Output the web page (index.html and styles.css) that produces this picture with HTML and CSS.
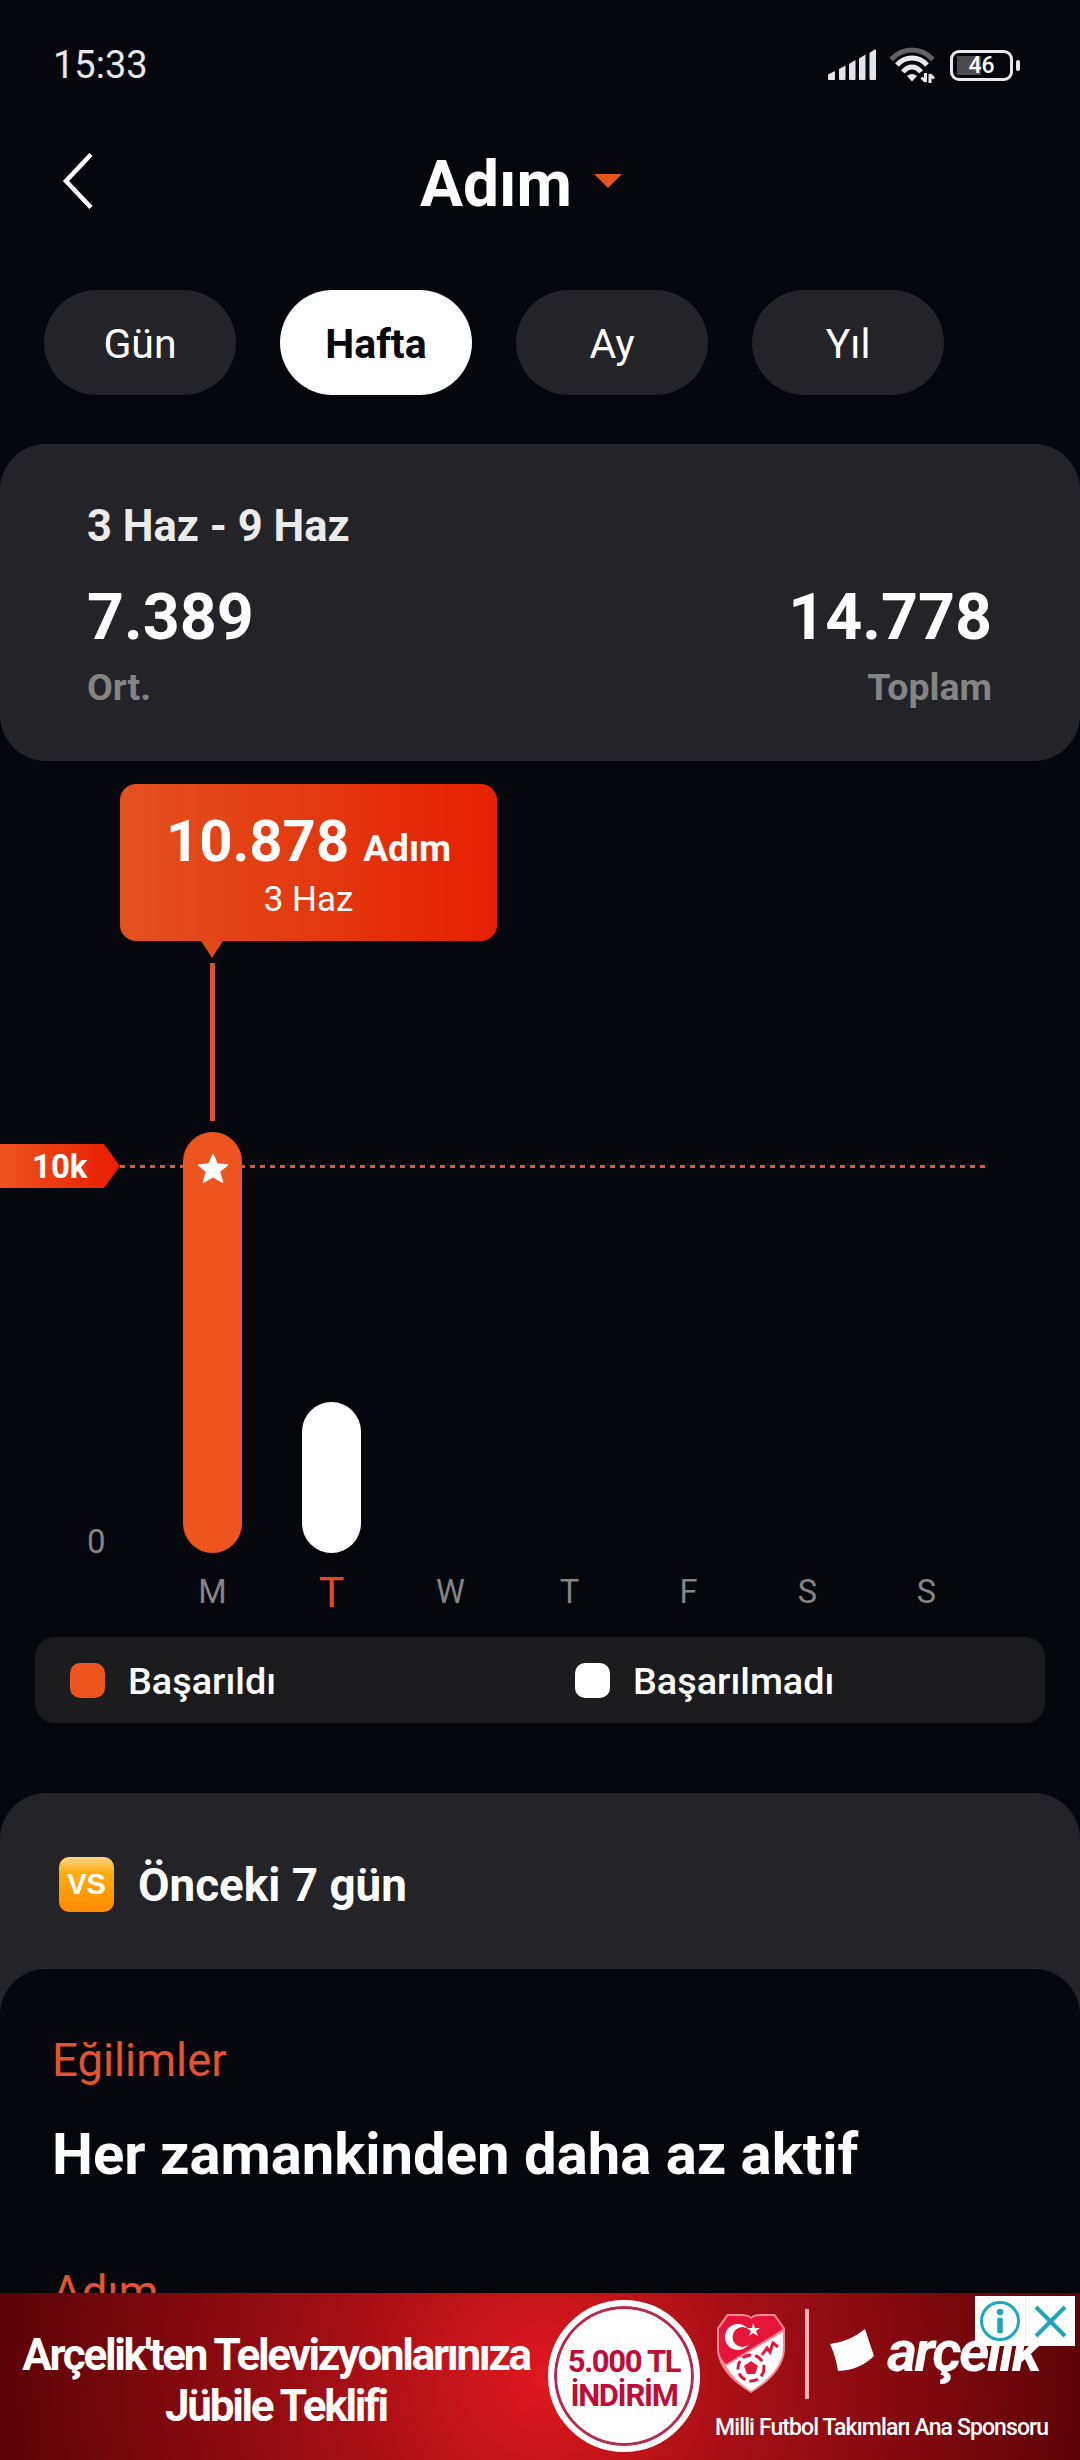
FILE: index.html
```html
<!DOCTYPE html>
<html lang="tr">
<head>
    <meta charset="UTF-8">
    <meta name="viewport" content="width=device-width, initial-scale=1.0">
    <title>Adım</title>
    <link rel="stylesheet" href="styles.css">
</head>
<body>

<div class="status-bar">
    <span class="time">15:33</span>
    <div class="status-icons">
        <svg class="signal" width="48" height="32" viewBox="0 0 48 32" fill="#e4e4e8">
            <path d="M0 25.500l7-3.500v8q0 1-1 1h-5q-1 0-1-1z"/>
            <path d="M11 20l6.500-3.500v13.500q0 1-1 1h-4.500q-1 0-1-1z"/>
            <path d="M21 15l6.500-4v19q0 1-1 1h-4.500q-1 0-1-1z"/>
            <path d="M31 9.500l6.500-4v24.500q0 1-1 1h-4.500q-1 0-1-1z"/>
            <path d="M41.500 4l5-3.500q1.500-.5 1.500 1v28.500q0 1-1 1h-4.500q-1 0-1-1z"/>
        </svg>
        <svg class="wifi" width="46" height="36" viewBox="0 0 46 36" fill="none" stroke-width="5">
            <path d="M2 12.500Q11 3 23 3T44 12.500" stroke="#626264"/>
            <path d="M8 18Q14 11 23 11T38 18" stroke="#e8e8ec"/>
            <path d="M14 25Q18 20 23 20T32 25" stroke="#e8e8ec"/>
            <path d="M18 29q5-4 10 0l-5 5.500z" fill="#e8e8ec"/>
            <path d="M36.500 26v9M41 27v9M36.500 34.500l-4-4M41 27.500l4 4" stroke="#e8e8ec" stroke-width="3"/>
        </svg>
        <div class="battery"><span>46</span></div>
    </div>
</div>

<header class="header">
    <svg class="back" width="32" height="56" viewBox="0 0 32 56" fill="none" stroke="#fff" stroke-width="4.500">
        <path d="M29 1.500L4 28l25 26.500"/>
    </svg>
    <h1>Adım</h1>
    <span class="caret"></span>
</header>

<nav class="tabs">
    <button type="button">Gün</button>
    <button type="button" class="active">Hafta</button>
    <button type="button">Ay</button>
    <button type="button">Yıl</button>
</nav>

<section class="summary">
    <p class="range">3 Haz - 9 Haz</p>
    <div class="totals">
        <div>
            <strong>7.389</strong>
            <span>Ort.</span>
        </div>
        <div class="right">
            <strong>14.778</strong>
            <span>Toplam</span>
        </div>
    </div>
</section>

<section class="chart">
    <div class="goal-line"></div>
    <div class="goal">10k</div>
    <div class="tooltip">
        <div><b>10.878</b><strong>Adım</strong></div>
        <span>3 Haz</span>
    </div>
    <div class="marker"></div>
    <div class="plot">
        <span class="zero">0</span>
        <div class="bars">
            <div class="col">
                <div class="bar done" style="height: 421px">
                    <svg width="32" height="31" viewBox="0 0 32 31" fill="#fff" stroke="#fff" stroke-width="1.500" stroke-linejoin="round">
                        <path d="M16 1.500L20 11L30.500 12L22.500 18.500L25.500 29L16 23.500L6.500 29L9.500 18.500L1.500 12L12 11z"/>
                    </svg>
                </div>
            </div>
            <div class="col"><div class="bar" style="height: 151px"></div></div>
            <div class="col"></div>
            <div class="col"></div>
            <div class="col"></div>
            <div class="col"></div>
            <div class="col"></div>
        </div>
    </div>
    <div class="days">
        <span>M</span>
        <span class="today">T</span>
        <span>W</span>
        <span>T</span>
        <span>F</span>
        <span>S</span>
        <span>S</span>
    </div>
</section>

<div class="legend">
    <div><i class="done"></i>Başarıldı</div>
    <div><i></i>Başarılmadı</div>
</div>

<section class="compare">
    <div class="compare-title">
        <span class="vs">VS</span>
        <h2>Önceki 7 gün</h2>
    </div>
    <div class="trends">
        <p class="label">Eğilimler</p>
        <h3>Her zamankinden daha az aktif</h3>
        <p class="label">Adım</p>
    </div>
</section>

<aside class="ad">
    <div class="ad-text">
        <span class="line1">Arçelik'ten Televizyonlarınıza</span>
        <span class="line2">Jübile Teklifi</span>
    </div>
    <div class="ad-circle">
        <span class="amount">5.000 TL</span>
        <span class="discount">İNDİRİM</span>
    </div>
    <div class="ad-sponsor">
        <div class="logos">
            <svg class="crest" width="72" height="84" viewBox="0 0 72 84">
                <path d="M12 3h14q8 0 10 3q2-3 10-3h14l10 14v22q-2 24-34 43Q4 63 2 39V17z" fill="#f08a94"/>
                <path d="M13 5h13q8 0 10 3q2-3 10-3h13l9 13-57 35Q4 46 4 39V18z" fill="#e5163a"/>
                <path d="M68 21v18q-2 22-32 41Q19 69 11 55z" fill="#fff"/>
                <circle cx="23" cy="26" r="13" fill="#fff"/>
                <circle cx="27.500" cy="26" r="10" fill="#e5163a"/>
                <path d="M38 12l2 5 5 0-4 3 2 5-5-3-4 3 2-5-4-3h5z" fill="#fff"/>
                <path d="M47 44l5-7 3 4 3-9 5 4" fill="none" stroke="#e5163a" stroke-width="3"/>
                <circle cx="36" cy="57" r="13" fill="none" stroke="#e5163a" stroke-width="3" stroke-dasharray="9 4"/>
                <path d="M36 50l7 5-3 8h-8l-3-8z" fill="#e5163a"/>
            </svg>
            <span class="divider"></span>
            <svg class="flag" width="46" height="46" viewBox="0 0 46 46" fill="#fff">
                <path d="M1 16Q20 14 36 1L45 28Q31 42 9 43Q7 29 1 16z"/>
            </svg>
            <span class="brand">arçelik</span>
        </div>
        <span class="sponsor">Milli Futbol Takımları Ana Sponsoru</span>
    </div>
    <div class="ad-choices">
        <svg width="100" height="50" viewBox="0 0 100 50" fill="none" stroke="#1aa7bf">
            <path d="M50.500 0v50" stroke="#eee" stroke-width="1"/>
            <circle cx="25" cy="25" r="18.500" stroke-width="3"/>
            <circle cx="25" cy="16" r="3.200" fill="#1aa7bf" stroke="none"/>
            <path d="M25 22v15" stroke-width="5.500"/>
            <path d="M61 11l29 29M90 11l-29 29" stroke-width="4"/>
        </svg>
    </div>
</aside>

</body>
</html>
```
FILE: styles.css
```css
* {
    box-sizing: border-box;
}

body {
    margin: 0;
    width: 1080px;
    height: 2460px;
    overflow: hidden;
    position: relative;
    background-color: #05070c;
    color: #fff;
    font-family: Roboto, sans-serif;
}

h1, h2, h3, p {
    margin: 0;
}

.status-bar {
    display: flex;
    justify-content: space-between;
    align-items: center;
    height: 130px;
    padding: 0 60px 0 53px;
}

.time {
    font-size: 38px;
    color: #e8e8ec;
}

.status-icons {
    display: flex;
    align-items: center;
    gap: 13px;
}

.battery {
    position: relative;
    width: 63px;
    height: 31px;
    margin: 0 7px 0 2px;
    border: 3px solid #e8e8ec;
    border-radius: 9px;
    background: linear-gradient(90deg, #4a4a4c 24px, transparent 24px) 4px 3px / 49px 19px no-repeat;
    text-align: center;
    font-size: 23px;
    font-weight: 500;
    line-height: 26px;
}

.battery::after {
    content: "";
    position: absolute;
    right: -10px;
    top: 7px;
    width: 4px;
    height: 11px;
    border-radius: 2px;
    background-color: #e8e8ec;
}

/* header */
.header {
    display: flex;
    align-items: center;
    height: 102px;
    padding-left: 62px;
}

h1 {
    margin-left: 326px;
    padding-top: 7px;
    font-size: 64px;
    font-weight: 700;
    line-height: 76px;
}

.caret {
    margin-left: 22px;
    border: 14px solid transparent;
    border-top-color: #e9531f;
    border-bottom: 0;
}

.tabs {
    display: flex;
    gap: 44px;
    padding: 58px 0 0 44px;
}

.tabs button {
    width: 192px;
    height: 105px;
    padding: 3px 0 0;
    border: none;
    border-radius: 53px;
    background-color: #232328;
    color: #fff;
    font-family: inherit;
    font-size: 41px;
}

.tabs .active {
    background-color: #fff;
    color: #05070c;
    font-weight: 700;
}

/* summary card */
.summary {
    height: 317px;
    margin-top: 49px;
    padding: 57px 88px 0 87px;
    border-radius: 46px;
    background-color: #242328;
}

.range {
    font-size: 43.5px;
    font-weight: 700;
    line-height: 52px;
    color: #ebebeb;
}

.totals {
    display: flex;
    justify-content: space-between;
    margin-top: 26px;
}

.totals div {
    display: flex;
    flex-direction: column;
}

.totals .right {
    align-items: flex-end;
}

.totals strong {
    font-size: 64.5px;
    line-height: 76px;
}

.totals span {
    margin-top: 10px;
    font-size: 37.5px;
    font-weight: 700;
    line-height: 45px;
    color: #858585;
}

/* chart */
.chart {
    position: relative;
    height: 876px;
    padding-top: 371px;
}

.plot {
    position: relative;
    z-index: 1;
    display: flex;
    align-items: flex-end;
    height: 421px;
    padding-left: 87px;
}

.zero {
    width: 66px;
    font-size: 33px;
    line-height: 22px;
    color: #858585;
}

.bars,
.days {
    display: flex;
    align-items: flex-end;
}

.col,
.days span {
    width: 119px;
    display: flex;
    justify-content: center;
}

.bar {
    width: 59px;
    border-radius: 30px;
    background-color: #fff;
}

.done {
    background-color: #ed541e;
}

.bar.done {
    display: flex;
    justify-content: center;
    padding-top: 21px;
}

.days {
    height: 78px;
    align-items: center;
    padding-left: 153px;
    font-size: 32.5px;
    color: #858585;
}

.days .today {
    font-size: 43px;
    color: #e2492b;
}

.goal-line {
    position: absolute;
    left: 120px;
    top: 404px;
    width: 865px;
    height: 3px;
    background: repeating-linear-gradient(90deg, #d45a43 0 5px, transparent 5px 10px);
}

.goal {
    position: absolute;
    left: 0;
    top: 383px;
    width: 120px;
    height: 44px;
    padding-left: 32px;
    clip-path: polygon(0 0, 104px 0, 100% 50%, 104px 100%, 0 100%);
    background: linear-gradient(90deg, #ed541e, #ea1c00);
    font-size: 33px;
    font-weight: 700;
    line-height: 46px;
}

.tooltip {
    position: absolute;
    left: 120px;
    top: 23px;
    width: 377px;
    height: 157px;
    padding-top: 21px;
    border-radius: 16px;
    background: linear-gradient(90deg, #e2521f, #e52000);
    text-align: center;
}

.tooltip::after {
    content: "";
    position: absolute;
    left: 81px;
    bottom: -17px;
    border: 11px solid transparent;
    border-top: 17px solid #e04a19;
    border-bottom: 0;
}

.tooltip div {
    display: flex;
    justify-content: center;
    align-items: baseline;
    gap: 14px;
    height: 72px;
    line-height: 72px;
}

.tooltip b {
    font-size: 58px;
}

.tooltip strong {
    font-size: 37px;
    font-weight: 700;
}

.tooltip span {
    display: block;
    font-size: 35px;
    line-height: 45px;
}

.marker {
    position: absolute;
    left: 210px;
    top: 202px;
    width: 5px;
    height: 158px;
    background-color: #d4513a;
}

.legend {
    display: grid;
    grid-template-columns: 505px 1fr;
    align-items: center;
    height: 86px;
    margin: 0 35px;
    padding: 1px 0 0 35px;
    border-radius: 20px;
    background-color: #1c1c1e;
    font-size: 37.800px;
    font-weight: 500;
}

.legend div {
    display: flex;
    align-items: center;
    gap: 23px;
}

.legend i {
    width: 35px;
    height: 35px;
    border-radius: 10px;
    background-color: #fff;
}

.legend .done {
    background-color: #ed541e;
}

/* previous week */
.compare {
    margin-top: 70px;
    border-radius: 46px 46px 0 0;
    background-color: #242328;
}

.compare-title {
    display: flex;
    align-items: center;
    gap: 24px;
    height: 176px;
    padding: 6px 0 0 59px;
}

.vs {
    width: 55px;
    height: 55px;
    border-radius: 10px;
    background: linear-gradient(#ffd285, #ffad0d 30%, #ff8a00);
    text-align: center;
    font-family: "Liberation Sans", sans-serif;
    font-size: 29px;
    font-weight: 700;
    line-height: 55px;
}

h2 {
    padding-top: 3px;
    font-size: 45.800px;
    font-weight: 700;
}

.trends {
    height: 500px;
    padding: 65px 52px;
    border-radius: 46px 46px 0 0;
    background-color: #05070c;
}

.label {
    font-size: 45.5px;
    line-height: 54px;
    color: #e2532f;
}

h3 {
    margin: 31px 0 77px;
    font-size: 58px;
    font-weight: 700;
    line-height: 70px;
}

/* bottom banner stays over the page */
.ad {
    position: absolute;
    left: 0;
    bottom: 0;
    display: flex;
    width: 1080px;
    height: 167px;
    background: radial-gradient(circle 620px at 545px 84px, #e0181f, #a50f15 32%, #5c0306 88%);
}

.ad-text {
    display: flex;
    flex-direction: column;
    align-items: center;
    width: 552px;
    padding-top: 37px;
    font-size: 44px;
    font-weight: 700;
    line-height: 51px;
    letter-spacing: -2.300px;
    white-space: nowrap;
}

.ad-circle {
    display: flex;
    flex-direction: column;
    align-items: center;
    width: 152px;
    height: 152px;
    margin: 7px 0 0 -4px;
    padding-top: 39px;
    border: 6px solid #fff;
    border-radius: 50%;
    background-color: #fff;
    box-shadow: inset 0 0 0 3px #b8284c;
    color: #c00c39;
    font-size: 31px;
    font-weight: 700;
    line-height: 34px;
    letter-spacing: -1.300px;
}

.ad-sponsor {
    margin-left: 15px;
    padding-top: 16px;
}

.logos {
    display: flex;
    align-items: center;
    height: 90px;
}

.crest {
    margin-top: -2px;
}

.divider {
    width: 4px;
    height: 90px;
    margin: 0 20px 0 18px;
    background-color: #f0b3b3;
}

.flag {
    margin-top: -6px;
}

.brand {
    margin: -6px 0 0 12px;
    font-size: 58px;
    font-style: italic;
    font-weight: 700;
    letter-spacing: -2.500px;
}

.sponsor {
    display: block;
    margin-top: 14px;
    font-size: 23px;
    font-weight: 500;
    line-height: 30px;
    letter-spacing: -.900px;
    white-space: nowrap;
}

.ad-choices {
    position: absolute;
    right: 5px;
    top: 3px;
    width: 100px;
    height: 50px;
    background-color: #fff;
}
```
